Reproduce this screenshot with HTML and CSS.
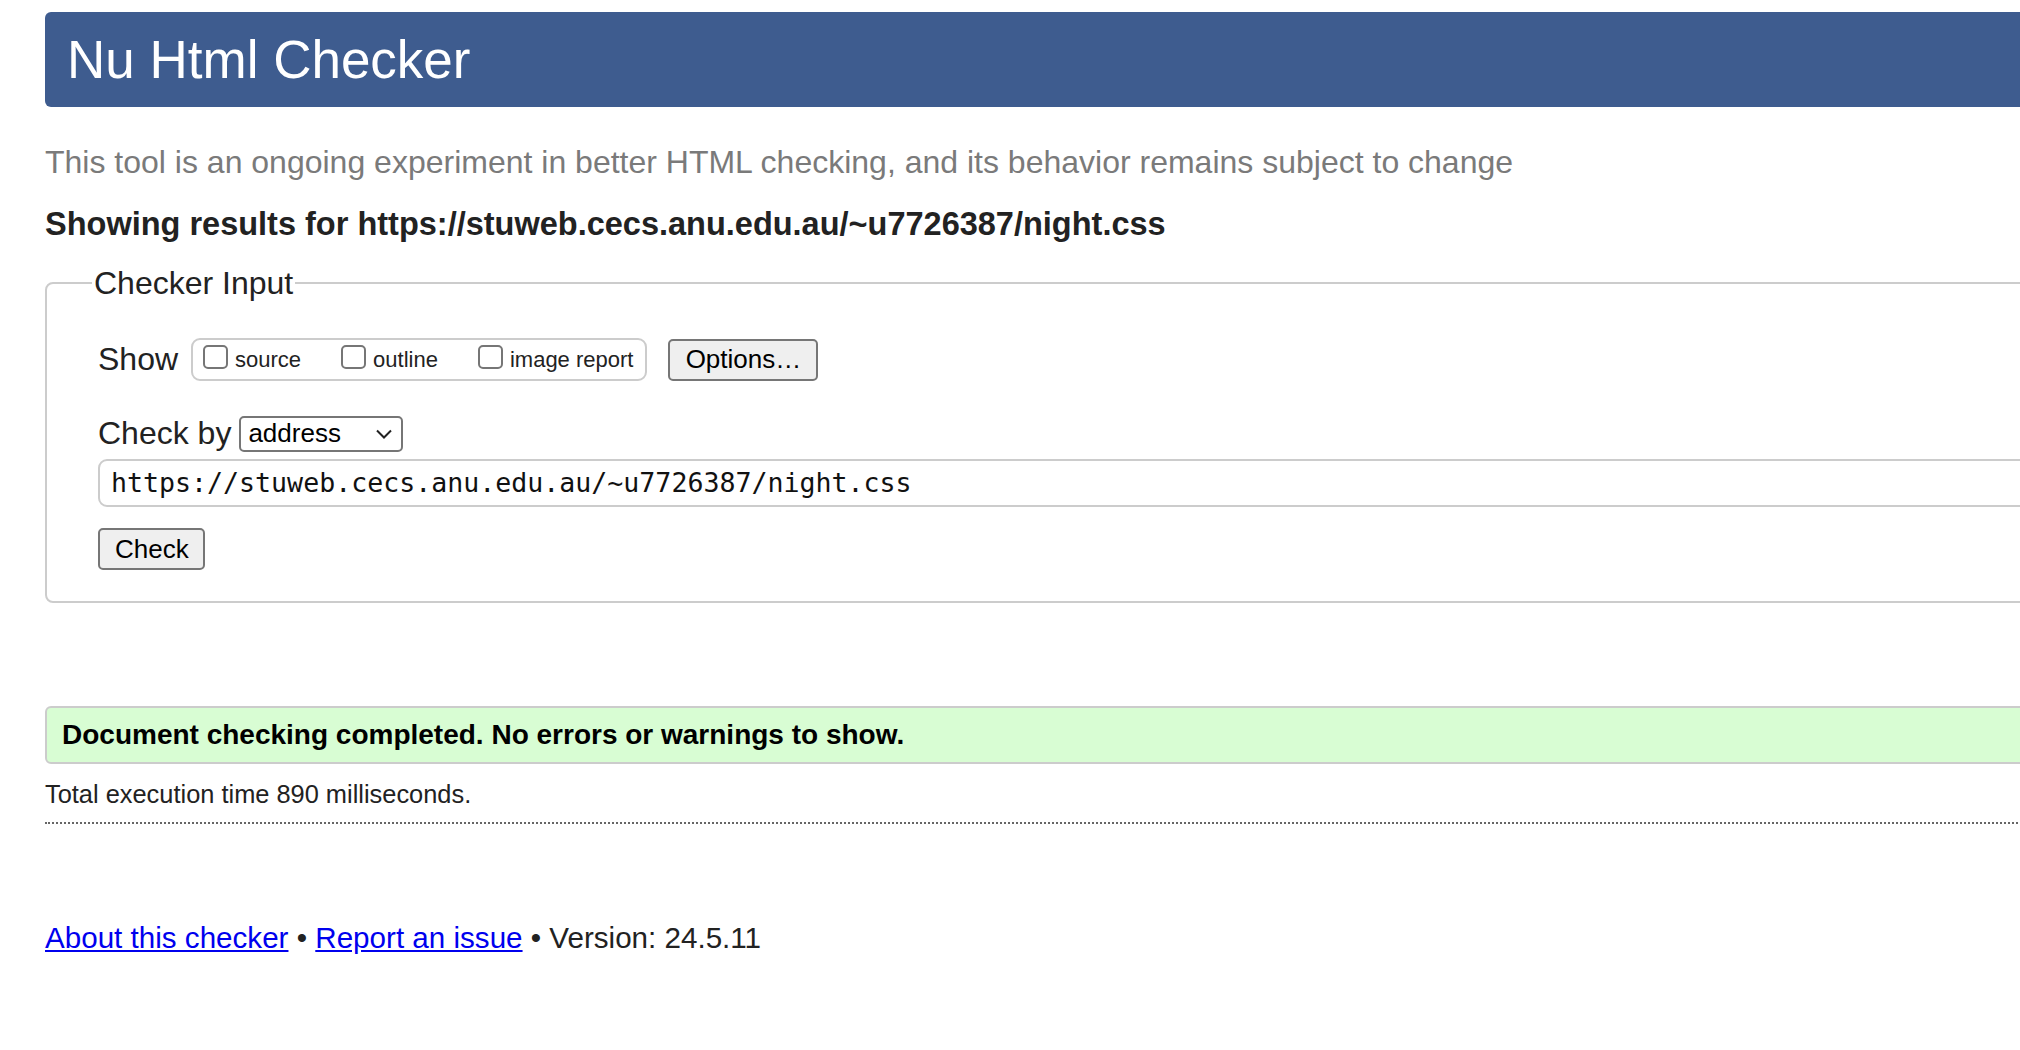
FILE: index.html
```html
<!DOCTYPE html>
<html lang="en">
<head>
<meta charset="utf-8">
<title>Nu Html Checker</title>
<link rel="stylesheet" href="styles.css">
</head>
<body>
<div class="page">
  <h1 class="banner">Nu Html Checker</h1>
  <p class="intro">This tool is an ongoing experiment in better HTML checking, and its behavior remains subject to change</p>
  <h2 class="showing">Showing results for https://stuweb.cecs.anu.edu.au/~u7726387/night.css</h2>
  <fieldset class="checker">
    <legend class="legend">Checker Input</legend>
    <div class="row-show">
      <span class="show-label">Show</span>
      <div class="group">
        <label class="opt"><input class="box" type="checkbox"><span>source</span></label>
        <label class="opt"><input class="box" type="checkbox"><span>outline</span></label>
        <label class="opt"><input class="box" type="checkbox"><span>image report</span></label>
      </div>
      <button class="btn btn-options" type="button">Options…</button>
    </div>
    <div class="row-by">
      <span class="by-label">Check by</span>
      <div class="select">
        <span class="select-text">address</span>
        <svg class="chev" width="18" height="12" viewBox="0 0 18 12"><path d="M2 2.5 L9 9.5 L16 2.5" fill="none" stroke="#222" stroke-width="2"/></svg>
      </div>
    </div>
    <div class="url">https://stuweb.cecs.anu.edu.au/~u7726387/night.css</div>
    <div class="row-check"><button class="btn btn-check" type="button">Check</button></div>
  </fieldset>
  <div class="success">Document checking completed. No errors or warnings to show.</div>
  <p class="total">Total execution time 890 milliseconds.</p>
  <div class="dotted"></div>
  <p class="footer"><a href="#">About this checker</a> • <a href="#">Report an issue</a> • Version: 24.5.11</p>
</div>
</body>
</html>
```
FILE: styles.css
```css
html { overflow: hidden; background: #fff; }
body {
  margin: 0;
  padding: 12px 0 0 45px;
  font-family: "Liberation Sans", Arial, Helvetica, sans-serif;
  color: #222;
}
.page { width: 2300px; }

.banner {
  margin: 0;
  height: 95px;
  line-height: 95px;
  padding-left: 22px;
  font-size: 53px;
  font-weight: normal;
  color: #fff;
  background: #3e5c8f;
  border-radius: 6px 0 0 6px;
}

.intro {
  margin: 36px 0 0;
  font-size: 32px;
  line-height: 38px;
  color: #7a7a7a;
}

.showing {
  margin: 24px 0 0;
  font-size: 32.5px;
  line-height: 38px;
  font-weight: bold;
  color: #222;
}

.checker {
  margin: 21px 0 0;
  border: 2px solid #ccc;
  border-radius: 8px;
  padding: 36px 0 31px 51px;
  min-width: 0;
}
.legend {
  font-size: 32px;
  line-height: 38px;
  padding: 0 2px;
  margin-left: -6px;
  color: #222;
}

.row-show {
  display: flex;
  align-items: center;
  height: 43px;
}
.show-label { font-size: 32px; margin-right: 13px; }
.group {
  box-sizing: border-box;
  height: 43px;
  border: 2px solid #ccc;
  border-radius: 9px;
  padding: 0 12px 0 10px;
  display: flex;
  align-items: center;
  gap: 40px;
}
.opt {
  display: flex;
  align-items: center;
  gap: 7px;
  font-size: 22px;
  color: #222;
}
.box {
  appearance: none;
  -webkit-appearance: none;
  width: 25px;
  height: 24px;
  margin: 0 0 6px 0;
  border: 2px solid #767676;
  border-radius: 5px;
  background: #fff;
  box-sizing: border-box;
}

.btn {
  box-sizing: border-box;
  height: 42px;
  border: 2px solid #767676;
  border-radius: 5px;
  background: #efefef;
  color: #000;
  font-family: "Liberation Sans", Arial, sans-serif;
  font-size: 26px;
  padding: 0 15px;
}
.btn-options { margin-left: 21px; width: 150px; }

.row-by {
  display: flex;
  align-items: center;
  margin-top: 34px;
}
.by-label { font-size: 32px; }
.select {
  box-sizing: border-box;
  margin-left: 8px;
  width: 164px;
  height: 36px;
  border: 2px solid #767676;
  border-radius: 5px;
  padding: 0 8px 0 7px;
  display: flex;
  align-items: center;
  justify-content: space-between;
  font-size: 26px;
  color: #000;
  background: #fff;
}

.url {
  box-sizing: border-box;
  margin-top: 7px;
  width: 2100px;
  height: 48px;
  line-height: 44px;
  border: 2px solid #ccc;
  border-radius: 9px;
  padding-left: 11px;
  font-family: "DejaVu Sans Mono", "Liberation Mono", monospace;
  font-size: 26.6px;
  color: #111;
}

.row-check { margin-top: 21px; display: flex; }
.btn-check { width: 107px; }

.success {
  box-sizing: border-box;
  margin-top: 103px;
  height: 58px;
  line-height: 54px;
  border: 2px solid #ccc;
  border-radius: 6px 0 0 6px;
  background: #d8fdd3;
  padding-left: 15px;
  font-size: 28px;
  font-weight: bold;
  color: #000;
}

.total {
  margin: 15px 0 0;
  font-size: 25.4px;
  line-height: 30px;
  color: #222;
}

.dotted {
  margin-top: 13px;
  border-top: 2px dotted #666;
}

.footer {
  margin: 96px 0 0;
  font-size: 29.6px;
  line-height: 36px;
  color: #222;
}
.footer a { color: #0000ee; text-decoration: underline; }
```
